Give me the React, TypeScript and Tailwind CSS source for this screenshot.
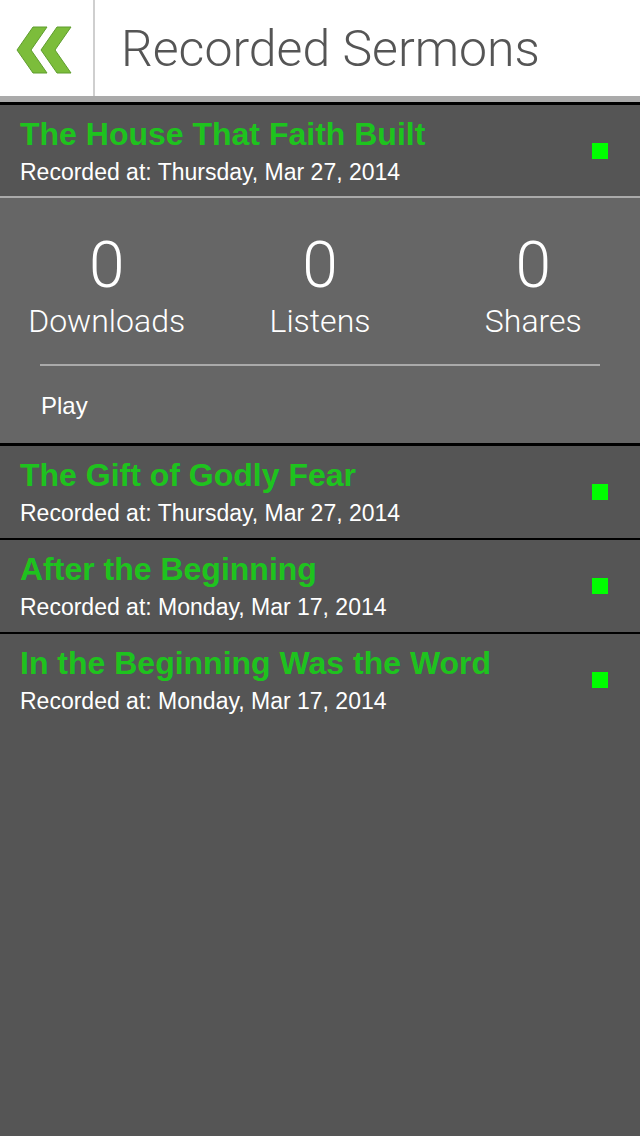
type Sermon = { title: string; date: string };

const sermons: Sermon[] = [
  { title: "The House That Faith Built", date: "Thursday, Mar 27, 2014" },
  { title: "The Gift of Godly Fear", date: "Thursday, Mar 27, 2014" },
  { title: "After the Beginning", date: "Monday, Mar 17, 2014" },
  { title: "In the Beginning Was the Word", date: "Monday, Mar 17, 2014" },
];

const stats = [
  { value: 0, label: "Downloads" },
  { value: 0, label: "Listens" },
  { value: 0, label: "Shares" },
];

function BackIcon() {
  return (
    <svg width="93" height="96" viewBox="0 0 93 96">
      <polygon points="33,27 47,27 31,50 47,73 33,73 17,50" fill="#7cbd3b" stroke="#5f9d2e" strokeWidth="1" strokeLinejoin="round" />
      <polygon points="57,27 71,27 55,50 71,73 57,73 41,50" fill="#7cbd3b" stroke="#5f9d2e" strokeWidth="1" strokeLinejoin="round" />
    </svg>
  );
}

function SermonRow({ sermon, border }: { sermon: Sermon; border: string }) {
  return (
    <div className={`flex items-start justify-between border-black pl-5 pr-8 ${border}`}>
      <div className="pt-[11px]">
        <div className="font-['Liberation_Sans',sans-serif] text-[32px] leading-[37px] font-bold text-[#1ec31e]">{sermon.title}</div>
        <div className="mt-[6px] font-['Liberation_Sans',sans-serif] text-[23px] leading-[26px] text-white">Recorded at: {sermon.date}</div>
      </div>
      <div className="mt-[38px] h-4 w-4 bg-[#00ff00]" />
    </div>
  );
}

export default function App() {
  return (
    <div className="flex min-h-[1136px] w-[640px] flex-col bg-[#555]">
      <header className="flex h-[96px] bg-white">
        <div className="w-[95px] border-r-2 border-[#cfcfcf]">
          <BackIcon />
        </div>
        <h1 className="pl-[26px] pt-[21px] font-['Roboto',sans-serif] text-[50px] leading-[57px] font-light text-[#555]">Recorded Sermons</h1>
      </header>
      <div className="h-[6px] bg-[#aaa]" />

      <SermonRow sermon={sermons[0]} border="border-t-[3px] h-[94px]" />
      <div className="h-[2px] bg-[#aaa]" />
      <div className="h-[245px] bg-[#666] pt-[36px]">
        <div className="grid grid-cols-3 text-center font-['Roboto',sans-serif] font-light text-white">
          {stats.map((s) => (
            <div key={s.label}>
              <div className="text-[64px] leading-[64px]">{s.value}</div>
              <div className="mt-[7px] text-[32px] leading-[32px]">{s.label}</div>
            </div>
          ))}
        </div>
        <div className="mx-10 mt-[27px] h-[2px] bg-[#aaa]" />
        <div className="mt-[26px] pl-[41px] font-['Liberation_Sans',sans-serif] text-[24px] leading-[28px] text-white">Play</div>
      </div>
      <SermonRow sermon={sermons[1]} border="border-t-[3px] h-[95px]" />
      <SermonRow sermon={sermons[2]} border="border-t-2 h-[94px]" />
      <SermonRow sermon={sermons[3]} border="border-t-2 h-[94px]" />
    </div>
  );
}
